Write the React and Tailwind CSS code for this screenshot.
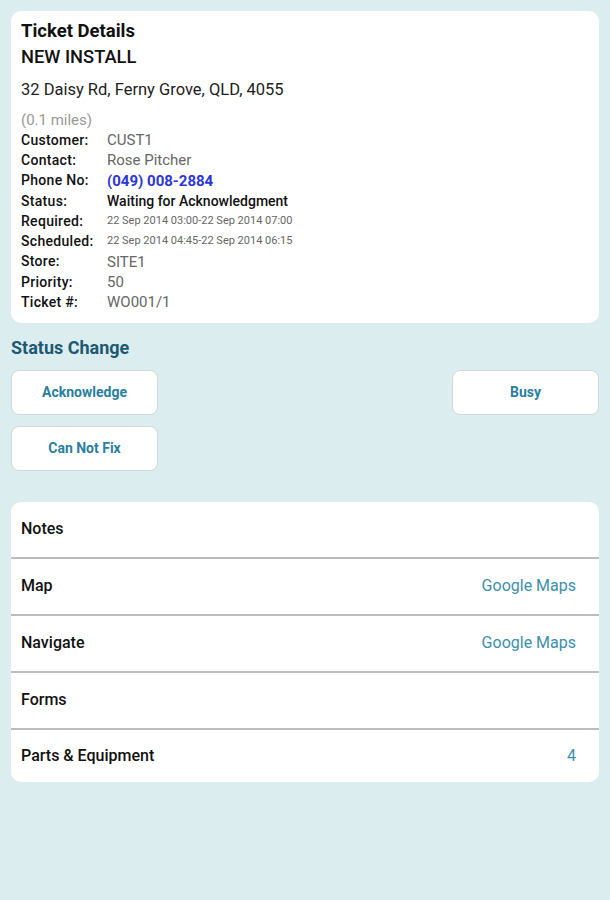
import React from 'react';

// Ticket detail rows
const details = [
    { label: 'Customer:', value: 'CUST1', cls: 'text-[15px] text-[#666]' },
    { label: 'Contact:', value: 'Rose Pitcher', cls: 'text-[15px] text-[#666]' },
    { label: 'Phone No:', value: '(049) 008-2884', cls: 'text-[15px] font-bold text-[#2b35d8]' },
    { label: 'Status:', value: 'Waiting for Acknowledgment', cls: 'text-[14px] font-medium text-[#111]' },
    { label: 'Required:', value: '22 Sep 2014 03:00-22 Sep 2014 07:00', cls: 'text-[11px] text-[#666]' },
    { label: 'Scheduled:', value: '22 Sep 2014 04:45-22 Sep 2014 06:15', cls: 'text-[11px] text-[#666]' },
    { label: 'Store:', value: 'SITE1', cls: 'text-[15px] text-[#666]' },
    { label: 'Priority:', value: '50', cls: 'text-[15px] text-[#666]' },
    { label: 'Ticket #:', value: 'WO001/1', cls: 'text-[15px] text-[#666]' },
];

const links = [
    { label: 'Notes', extra: '', h: 'h-[55px]' },
    { label: 'Map', extra: 'Google Maps', h: 'h-[57px]' },
    { label: 'Navigate', extra: 'Google Maps', h: 'h-[57px]' },
    { label: 'Forms', extra: '', h: 'h-[57px]' },
    { label: 'Parts & Equipment', extra: '4', h: 'h-[54px]' },
];

function StatusButton({ children }) {
    return (
        <button className="w-[147px] h-[45px] bg-white rounded-[8px] border border-[#cfd8da] text-[14px] font-bold text-[#2a7fa0]">
            {children}
        </button>
    );
}

export default function App() {
    return (
        <div className="w-[610px] h-[900px] bg-[#dcedf0] px-[11px] pt-[11px] font-['Roboto',sans-serif]">
            <div className="bg-white rounded-[10px] pl-[10px] pr-3 pt-[10px] pb-[10px]">
                <h1 className="text-[18.5px] font-bold text-[#111] leading-[20px]">Ticket Details</h1>
                <h2 className="mt-[5px] text-[18.3px] font-medium text-[#111] leading-[22px]">NEW INSTALL</h2>
                <p className="mt-[12px] text-[16.5px] text-[#222] leading-[20px]">32 Daisy Rd, Ferny Grove, QLD, 4055</p>
                <p className="mt-[10px] text-[15px] text-[#999] leading-[20px]">(0.1 miles)</p>
                <div className="flex flex-col">
                    {details.map(d => (
                        <div key={d.label} className="flex items-center h-[20.3px]">
                            <span className="w-[86px] text-[14px] font-medium text-[#111] tracking-[0.3px]">{d.label}</span>
                            <span className={d.cls}>{d.value}</span>
                        </div>
                    ))}
                </div>
            </div>

            <h3 className="mt-[15px] text-[18px] font-bold text-[#1d5a72] leading-[20px]">Status Change</h3>
            <div className="mt-[12px] flex justify-between">
                <StatusButton>Acknowledge</StatusButton>
                <StatusButton>Busy</StatusButton>
            </div>
            <div className="mt-[11px]">
                <StatusButton>Can Not Fix</StatusButton>
            </div>

            <div className="mt-[31px] bg-white rounded-[10px] overflow-hidden">
                {links.map((l, i) => (
                    <div
                        key={l.label}
                        className={`flex items-center justify-between ${l.h} pl-[10px] pr-[23px] ${i > 0 ? 'border-t-2 border-[#bdbdbd]' : ''}`}
                    >
                        <span className="text-[16px] font-medium text-[#111]">{l.label}</span>
                        <span className="text-[16px] text-[#3d8fb0]">{l.extra}</span>
                    </div>
                ))}
            </div>
        </div>
    );
}
